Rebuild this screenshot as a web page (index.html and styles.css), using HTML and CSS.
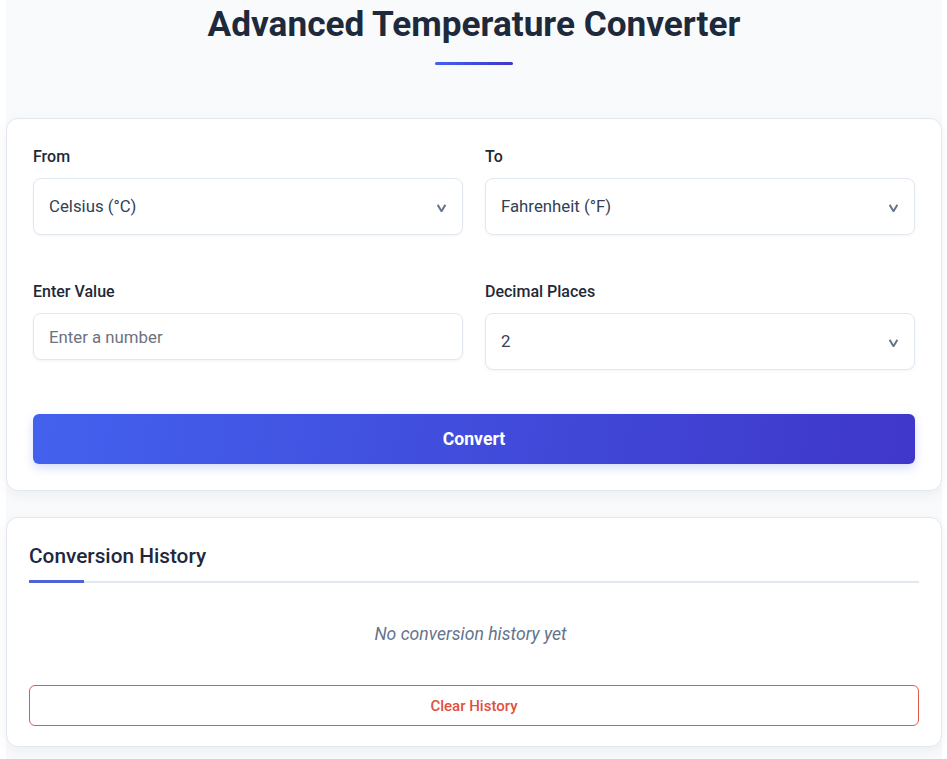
FILE: index.html
```html
<!DOCTYPE html>
<html lang="en">
<head>
<meta charset="utf-8">
<title>Advanced Temperature Converter</title>
<link rel="stylesheet" href="styles.css">
</head>
<body>
<div class="app">
  <header class="header">
    <h1 class="title">Advanced Temperature Converter</h1>
    <div class="title-bar"></div>
  </header>

  <section class="card converter">
    <div class="form-grid">
      <div class="field">
        <label class="label">From</label>
        <div class="select-wrap">
          <select class="control select">
            <option>Celsius (°C)</option>
          </select>
          <svg class="chevron" width="9" height="8" viewBox="0 0 9 8"><path d="M0.6 0.8 L4.5 7.2 L8.4 0.8" fill="none" stroke="#64748b" stroke-width="2"/></svg>
        </div>
      </div>
      <div class="field">
        <label class="label">To</label>
        <div class="select-wrap">
          <select class="control select">
            <option>Fahrenheit (°F)</option>
          </select>
          <svg class="chevron" width="9" height="8" viewBox="0 0 9 8"><path d="M0.6 0.8 L4.5 7.2 L8.4 0.8" fill="none" stroke="#64748b" stroke-width="2"/></svg>
        </div>
      </div>
      <div class="field">
        <label class="label">Enter Value</label>
        <input class="control input" type="text" placeholder="Enter a number">
      </div>
      <div class="field">
        <label class="label">Decimal Places</label>
        <div class="select-wrap">
          <select class="control select">
            <option>2</option>
          </select>
          <svg class="chevron" width="9" height="8" viewBox="0 0 9 8"><path d="M0.6 0.8 L4.5 7.2 L8.4 0.8" fill="none" stroke="#64748b" stroke-width="2"/></svg>
        </div>
      </div>
    </div>
    <button class="btn-convert" type="button">Convert</button>
  </section>

  <section class="card history">
    <h2 class="history-title">Conversion History</h2>
    <div class="rule"><span class="rule-accent"></span><span class="rule-line"></span></div>
    <p class="empty">No conversion history yet</p>
    <button class="btn-clear" type="button">Clear History</button>
  </section>
</div>
</body>
</html>
```

FILE: styles.css
```css
* { box-sizing: border-box; }

html, body {
  margin: 0;
  padding: 0;
  background: #ffffff;
}

body {
  font-family: Roboto, "Liberation Sans", Arial, sans-serif;
  color: #1e293b;
}

.app {
  margin: 0 5px 0 6px;
  background: #f8fafc;
  min-height: 100vh;
  padding-bottom: 10px;
}

.header {
  display: flex;
  flex-direction: column;
  align-items: center;
  padding-top: 4px;
}

.title {
  margin: 0;
  font-size: 35.2px;
  line-height: 40px;
  font-weight: 700;
  color: #1e293b;
}

.title-bar {
  width: 78px;
  height: 3px;
  margin-top: 18px;
  border-radius: 2px;
  background: linear-gradient(90deg, #4361ee, #3f37c9);
}

.card {
  background: #ffffff;
  border: 1px solid #e2e8f0;
  border-radius: 12px;
  box-shadow: 0 4px 14px rgba(15, 23, 42, 0.05);
}

.converter {
  margin-top: 53px;
  padding: 26px;
}

.form-grid {
  display: grid;
  grid-template-columns: 1fr 1fr;
  column-gap: 22px;
  row-gap: 45px;
  align-items: start;
}

.field {
  display: flex;
  flex-direction: column;
}

.label {
  font-size: 16px;
  line-height: 24px;
  font-weight: 500;
  color: #1f2937;
  margin-bottom: 9px;
}

.select-wrap {
  position: relative;
}

.control {
  width: 100%;
  font-family: Roboto, "Liberation Sans", Arial, sans-serif;
  font-size: 16.8px;
  color: #334155;
  background: #ffffff;
  border: 1px solid #e2e8f0;
  border-radius: 8px;
  box-shadow: 0 1px 3px rgba(15, 23, 42, 0.05);
  padding: 0 15px;
  outline: none;
}

.select {
  height: 57px;
  padding-bottom: 1px;
  appearance: none;
  -webkit-appearance: none;
}

.input {
  height: 47px;
}

.input::placeholder {
  color: #6b7280;
}

.chevron {
  position: absolute;
  right: 17px;
  top: 26px;
  pointer-events: none;
}

.btn-convert {
  display: block;
  width: 100%;
  height: 50px;
  margin-top: 44px;
  border: none;
  border-radius: 6px;
  background: linear-gradient(100deg, #4361ee 0%, #3f37c9 100%);
  color: #ffffff;
  font-family: Roboto, "Liberation Sans", Arial, sans-serif;
  font-size: 17.6px;
  font-weight: 700;
  box-shadow: 0 4px 10px rgba(67, 97, 238, 0.22);
}

.history {
  margin-top: 26px;
  padding: 23px 22px 20px;
}

.history-title {
  margin: 0 0 9px;
  font-size: 20.8px;
  line-height: 30px;
  font-weight: 500;
  color: #1e293b;
}

.rule {
  display: flex;
  align-items: flex-end;
  height: 3px;
}

.rule-accent {
  width: 55px;
  height: 3px;
  background: #4f63d9;
}

.rule-line {
  flex: 1;
  height: 2px;
  background: #e2e8f0;
}

.empty {
  margin: 39px 0 39px;
  padding-right: 7px;
  text-align: center;
  font-size: 17.6px;
  line-height: 24px;
  font-style: italic;
  color: #64748b;
}

.btn-clear {
  display: block;
  width: 100%;
  height: 41px;
  background: #ffffff;
  border: 1px solid #e05a4a;
  border-radius: 6px;
  color: #e0503d;
  font-family: Roboto, "Liberation Sans", Arial, sans-serif;
  font-size: 15px;
  font-weight: 500;
}
```
